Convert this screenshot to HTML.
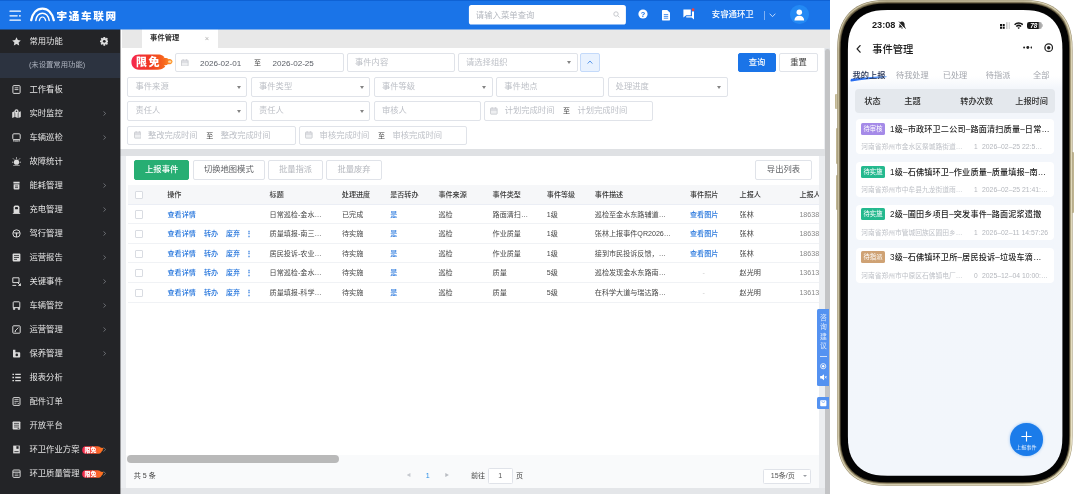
<!DOCTYPE html>
<html lang="zh-CN">
<head>
<meta charset="utf-8">
<title>事件管理</title>
<style>
*{box-sizing:border-box;margin:0;padding:0}
html,body{width:1080px;height:494px;overflow:hidden;background:#fff}
#desk,#phone{will-change:transform}
body{position:relative;font-family:"Liberation Sans","Noto Sans CJK SC",sans-serif;color:#333;-webkit-font-smoothing:antialiased}
.abs{position:absolute}
.t{position:absolute;white-space:nowrap;line-height:1}
/* desktop */
#desk{position:absolute;left:0;top:0;width:829.5px;height:494px;overflow:hidden;background:#eceef1}
#hdr{position:absolute;left:0;top:0;width:829.5px;height:29px;background:#1a74e8;border-top:1px solid #0f62d4}
#side{position:absolute;left:0;top:29px;width:120.4px;height:465px;background:#232427}
.mi{position:absolute;left:0;width:120.4px;height:24px}
.mi .tx{position:absolute;left:29.4px;top:.45px;height:24px;line-height:24px;font-size:8.3px;color:#e4e4e4;white-space:nowrap;letter-spacing:.05px}
.mi svg.ic{position:absolute;left:11.6px;top:7.9px;width:9px;height:9px}
.mi .ch{position:absolute;left:102.5px;top:9.5px;width:3.2px;height:5px}
#tabbar{position:absolute;left:120px;top:29px;width:709.5px;height:19px;background:#e8e8e8;border-left:2px solid #fff}
#filter{position:absolute;left:120.4px;top:48px;width:704.1px;height:101px;background:#fff}
.inp{position:absolute;height:19.2px;margin-top:-.2px;border:1px solid #e0e3e9;border-radius:2px;background:#fff;font-size:8.3px;color:#bcbfc6}
.inp .ph{position:absolute;left:7px;top:0;height:17.2px;line-height:17.2px;white-space:nowrap}
.inp .ar{position:absolute;right:5.8px;top:7.2px;width:0;height:0;border-left:2.4px solid transparent;border-right:2.4px solid transparent;border-top:3px solid #848484}
.r1{top:5.3px}.r2{top:29.6px}.r3{top:53.5px}.r4{top:77.8px}
.btn{position:absolute;height:19.4px;margin-top:-.25px;line-height:17.4px;border:1px solid #e0e3e9;border-radius:2px;background:#fff;font-size:8.3px;color:#606266;text-align:center;white-space:nowrap}
#panel{position:absolute;left:125.5px;top:155.5px;width:693.7px;height:332.5px;background:#fff;overflow:hidden}
.th{position:absolute;top:0;height:19.5px;line-height:21.3px;font-size:7.1px;font-weight:500;color:#383838;white-space:nowrap}
.row{position:absolute;left:2.8px;width:691px;height:19.5px;border-bottom:1px solid #f0f2f5}
.td{position:absolute;top:0;height:19.5px;line-height:21.3px;font-size:7.1px;color:#474747;white-space:nowrap}
.lk{color:#2877dd;font-weight:500}
.cb{position:absolute;left:7px;top:5.9px;width:8.2px;height:8.2px;border:1px solid #d9dce2;border-radius:1px;background:#fff}
/* phone */
#phone{position:absolute;left:837px;top:0px;width:236px;height:486px}
</style>
</head>
<body>
<div id="desk">
<div id="hdr">
  <!-- hamburger -->
  <svg class="abs" style="left:9px;top:8.5px;width:13px;height:12px" viewBox="0 0 13 12"><g stroke="#fff" stroke-width="1.3" stroke-linecap="round"><path d="M1 1.2H11.4"/><path d="M1 5.8H8.2"/><path d="M1 10.2H11.4"/></g><circle cx="10.9" cy="5.8" r=".9" fill="#fff"/></svg>
  <!-- logo arcs -->
  <svg class="abs" style="left:29.5px;top:6px;width:25px;height:14.5px" viewBox="0 0 25 14.5"><g fill="none" stroke="#fff" stroke-linecap="round"><path d="M1.2 13.2C2.5 6 6.8 1.6 12.4 1.6C18 1.6 22.3 6 23.8 13.2" stroke-width="2.3"/><path d="M5.8 13.4C6.6 8.8 9 6.3 12.4 6.3C15.8 6.3 18.3 8.8 19.2 13.4" stroke-width="1.5"/><path d="M9.3 13.6C9.8 11.2 10.8 10 12.4 10C14 10 15.1 11.2 15.7 13.6" stroke-width="1.2"/></g></svg>
  <div class="t" style="left:56.6px;top:10.4px;font-size:10.6px;font-weight:900;color:#fff;letter-spacing:1.65px">宇通车联网</div>
  <!-- search -->
  <svg class="abs" style="left:468px;top:3px;width:159px;height:22px" viewBox="0 0 159 22"><rect x=".9" y="1.1" width="157" height="19.5" rx="2.6" fill="#fff"/></svg>
  <div class="t" style="left:475.8px;top:9.6px;font-size:8.4px;color:#b4b8bf">请输入菜单查询</div>
  <svg class="abs" style="left:612.5px;top:10.2px;width:7px;height:7px" viewBox="0 0 7 7"><circle cx="3" cy="3" r="2.2" fill="none" stroke="#b9bcc2" stroke-width=".8"/><path d="M4.7 4.7L6.4 6.4" stroke="#b9bcc2" stroke-width=".8"/></svg>
  <!-- help -->
  <svg class="abs" style="left:637.6px;top:8.4px;width:10px;height:10px" viewBox="0 0 10 10"><circle cx="5" cy="5" r="4.6" fill="#fff"/><text x="5" y="7.6" font-size="7.4" font-weight="bold" text-anchor="middle" fill="#1a74e8" font-family="Liberation Sans, sans-serif">?</text></svg>
  <!-- doc -->
  <svg class="abs" style="left:661.6px;top:9.2px;width:8px;height:10.4px" viewBox="0 0 8 10.4"><path d="M.6 0H5.2L8 2.8V9.8Q8 10.4 7.4 10.4H.6Q0 10.4 0 9.8V.6Q0 0 .6 0Z" fill="#fff"/><path d="M1.8 4.6H6.2M1.8 6.4H6.2M1.8 8.2H6.2" stroke="#1a74e8" stroke-width=".8"/></svg>
  <!-- chat -->
  <svg class="abs" style="left:683.2px;top:7.2px;width:12px;height:12px" viewBox="0 0 12 12"><path d="M.4 1.6H7.8V7.2H3.2L.4 9.4Z" fill="#fff"/><path d="M9 3.6H11V11.6L8.6 9.6H3.2V8.2H9Z" fill="#fff"/><circle cx="10.1" cy="1.7" r="1.4" fill="#f0413c"/></svg>
  <div class="t" style="left:711.8px;top:9.2px;font-size:8.4px;font-weight:500;color:#fff">安睿通环卫</div>
  <div class="abs" style="left:763.6px;top:9.5px;width:.8px;height:9px;background:#7fb0f3"></div>
  <svg class="abs" style="left:769.4px;top:11.7px;width:7px;height:4.6px" viewBox="0 0 6 4"><path d="M.5 .6L3 3.2L5.5 .6" fill="none" stroke="#cfe2fb" stroke-width=".8"/></svg>
  <!-- avatar -->
  <div class="abs" style="left:790.2px;top:4.4px;width:18.4px;height:18.4px;border-radius:50%;background:#2389f4"></div>
  <svg class="abs" style="left:794.2px;top:7.6px;width:10.6px;height:12px" viewBox="0 0 9.6 10.4"><circle cx="4.8" cy="2.7" r="2.5" fill="#fff"/><path d="M.4 10.2C.4 7.4 2.2 5.8 4.8 5.8C7.4 5.8 9.2 7.4 9.2 10.2Z" fill="#fff"/></svg>
</div>

<div id="side">
<div class="mi" style="top:0px"><svg class="ic" viewBox="0 0 9 9"><path d="M4.5 .3L5.8 3.1L8.8 3.4L6.6 5.4L7.2 8.4L4.5 6.9L1.8 8.4L2.4 5.4L.2 3.4L3.2 3.1Z" fill="#dadada"/></svg><span class="tx">常用功能</span><svg class="abs" style="left:99.6px;top:8.4px;width:8.6px;height:8.6px" viewBox="0 0 9 9"><g fill="#dedede"><circle cx="4.5" cy="4.5" r="3.35"/><rect x="3.55" y="-.1" width="1.9" height="9.2" rx=".3" transform="rotate(0 4.5 4.5)"/><rect x="3.55" y="-.1" width="1.9" height="9.2" rx=".3" transform="rotate(45 4.5 4.5)"/><rect x="3.55" y="-.1" width="1.9" height="9.2" rx=".3" transform="rotate(90 4.5 4.5)"/><rect x="3.55" y="-.1" width="1.9" height="9.2" rx=".3" transform="rotate(135 4.5 4.5)"/></g><circle cx="4.5" cy="4.5" r="1.45" fill="#232427"/></svg></div>
<div class="abs" style="left:0;top:23.6px;width:120.4px;height:25.6px;background:#2c3340"></div>
<div class="t" style="left:28.9px;top:32.1px;font-size:7.35px;color:#adb3be">(未设置常用功能)</div>
<div class="mi" style="top:48px"><svg class="ic" viewBox="0 0 9 9"><rect x=".9" y=".6" width="7.2" height="7.8" rx=".9" fill="none" stroke="#dadada" stroke-width="1"/><path d="M2.6 2.8H6.4M2.6 4.6H6.4" stroke="#dadada" stroke-width=".9"/></svg><span class="tx">工作看板</span></div>
<div class="mi" style="top:72px"><svg class="ic" viewBox="0 0 9 9"><path d="M.2 3.2L2.6 2.2V8L.2 9Z M3.2 2.2L5.8 3.2V9L3.2 8Z M6.4 3.2L8.8 2.2V8L6.4 9Z" fill="#dadada"/><circle cx="4.5" cy="2.4" r="2.1" fill="#dadada"/><circle cx="4.5" cy="2.3" r=".8" fill="#232427"/></svg><span class="tx">实时监控</span><svg class="ch" viewBox="0 0 3.2 5"><path d="M.5 .4L2.7 2.5L.5 4.6" fill="none" stroke="#8a8d93" stroke-width=".7"/></svg></div>
<div class="mi" style="top:96px"><svg class="ic" viewBox="0 0 9 9"><rect x=".8" y=".8" width="7.4" height="5.8" rx="1" fill="none" stroke="#dadada" stroke-width="1"/><path d="M1.8 6.8V8.6M7.2 6.8V8.6M2.6 8H6.4" stroke="#dadada" stroke-width="1"/></svg><span class="tx">车辆巡检</span><svg class="ch" viewBox="0 0 3.2 5"><path d="M.5 .4L2.7 2.5L.5 4.6" fill="none" stroke="#8a8d93" stroke-width=".7"/></svg></div>
<div class="mi" style="top:120px"><svg class="ic" viewBox="0 0 9 9"><circle cx="4.5" cy="5.2" r="2.6" fill="#dadada"/><path d="M4.5 .2V1.8M1 1.4L2.2 2.6M8 1.4L6.8 2.6M0 5.2H1.4M7.6 5.2H9M1.2 8.8H7.8" stroke="#dadada" stroke-width=".8"/></svg><span class="tx">故障统计</span></div>
<div class="mi" style="top:144px"><svg class="ic" viewBox="0 0 9 9"><path d="M1.4 .8H7.6V2.4H1.4Z M1.6 3.2H7.4V7.6Q7.4 8.6 6.4 8.6H2.6Q1.6 8.6 1.6 7.6Z" fill="#dadada"/><path d="M3 5H6M3 6.6H6" stroke="#232427" stroke-width=".7"/></svg><span class="tx">能耗管理</span><svg class="ch" viewBox="0 0 3.2 5"><path d="M.5 .4L2.7 2.5L.5 4.6" fill="none" stroke="#8a8d93" stroke-width=".7"/></svg></div>
<div class="mi" style="top:168px"><svg class="ic" viewBox="0 0 9 9"><path d="M1.6 2.2Q1.6 .6 3.2 .6H5.8Q7.4 .6 7.4 2.2V8.6H1.6Z" fill="#dadada"/><rect x="3" y="2" width="3" height="2.2" rx=".4" fill="#232427"/><path d="M.8 8.6H8.2" stroke="#dadada" stroke-width=".9"/></svg><span class="tx">充电管理</span><svg class="ch" viewBox="0 0 3.2 5"><path d="M.5 .4L2.7 2.5L.5 4.6" fill="none" stroke="#8a8d93" stroke-width=".7"/></svg></div>
<div class="mi" style="top:192px"><svg class="ic" viewBox="0 0 9 9"><circle cx="4.5" cy="4.5" r="3.7" fill="none" stroke="#dadada" stroke-width="1"/><circle cx="4.5" cy="4.7" r=".9" fill="#dadada"/><path d="M1 3.9H8M4.5 5V8" stroke="#dadada" stroke-width=".9"/></svg><span class="tx">驾行管理</span><svg class="ch" viewBox="0 0 3.2 5"><path d="M.5 .4L2.7 2.5L.5 4.6" fill="none" stroke="#8a8d93" stroke-width=".7"/></svg></div>
<div class="mi" style="top:216px"><svg class="ic" viewBox="0 0 9 9"><rect x=".6" y=".6" width="7.8" height="7.8" rx=".8" fill="#dadada"/><path d="M2 2.6H7M2 4.5H7M2 6.4H5" stroke="#232427" stroke-width=".8"/></svg><span class="tx">运营报告</span><svg class="ch" viewBox="0 0 3.2 5"><path d="M.5 .4L2.7 2.5L.5 4.6" fill="none" stroke="#8a8d93" stroke-width=".7"/></svg></div>
<div class="mi" style="top:240px"><svg class="ic" viewBox="0 0 9 9"><path d="M.8 .8H7V5.6H.8Z" fill="none" stroke="#dadada" stroke-width="1"/><path d="M.4 8.4H4.2" stroke="#dadada" stroke-width="1"/><path d="M5 5L8.6 8.6M6.4 8.6H8.6V6.4" stroke="#dadada" stroke-width="1" fill="none"/></svg><span class="tx">关键事件</span><svg class="ch" viewBox="0 0 3.2 5"><path d="M.5 .4L2.7 2.5L.5 4.6" fill="none" stroke="#8a8d93" stroke-width=".7"/></svg></div>
<div class="mi" style="top:264px"><svg class="ic" viewBox="0 0 9 9"><path d="M1.2 1.6Q1.2 .8 2 .8H7Q7.8 .8 7.8 1.6V6.6H1.2Z" fill="none" stroke="#dadada" stroke-width="1"/><path d="M1.4 6.6V8.4H2.8V6.6M6.2 6.6V8.4H7.6V6.6" stroke="#dadada" stroke-width=".8" fill="#dadada"/></svg><span class="tx">车辆管控</span><svg class="ch" viewBox="0 0 3.2 5"><path d="M.5 .4L2.7 2.5L.5 4.6" fill="none" stroke="#8a8d93" stroke-width=".7"/></svg></div>
<div class="mi" style="top:288px"><svg class="ic" viewBox="0 0 9 9"><rect x=".8" y=".8" width="7.4" height="7.4" rx=".8" fill="none" stroke="#dadada" stroke-width="1"/><path d="M3 6L6.4 2.6M2.6 6.4H4" stroke="#dadada" stroke-width=".9"/></svg><span class="tx">运营管理</span><svg class="ch" viewBox="0 0 3.2 5"><path d="M.5 .4L2.7 2.5L.5 4.6" fill="none" stroke="#8a8d93" stroke-width=".7"/></svg></div>
<div class="mi" style="top:312px"><svg class="ic" viewBox="0 0 9 9"><path d="M1 .8H3.4V3.2H7.4Q8.2 3.2 8.2 4V7.8Q8.2 8.6 7.4 8.6H1.8Q1 8.6 1 7.8Z" fill="#dadada"/><circle cx="4.8" cy="5.9" r="1.3" fill="#232427"/></svg><span class="tx">保养管理</span><svg class="ch" viewBox="0 0 3.2 5"><path d="M.5 .4L2.7 2.5L.5 4.6" fill="none" stroke="#8a8d93" stroke-width=".7"/></svg></div>
<div class="mi" style="top:336px"><svg class="ic" viewBox="0 0 9 9"><path d="M.4 1.4H2M3.2 1.4H8.8M.4 4.5H2M3.2 4.5H8.8M.4 7.6H2M3.2 7.6H8.8" stroke="#dadada" stroke-width="1.3"/></svg><span class="tx">报表分析</span></div>
<div class="mi" style="top:360px"><svg class="ic" viewBox="0 0 9 9"><rect x="1" y=".6" width="7" height="7.8" rx=".9" fill="none" stroke="#dadada" stroke-width="1"/><path d="M2.4 2.6H6.6M2.4 4.4H6.6M2.4 6.2H4.4M5.6 6.6H7" stroke="#dadada" stroke-width=".8"/></svg><span class="tx">配件订单</span></div>
<div class="mi" style="top:384px"><svg class="ic" viewBox="0 0 9 9"><rect x=".6" y=".4" width="7.8" height="8.2" rx=".8" fill="#dadada"/><path d="M2 2.4H7M2 4.2H7M2 6H7" stroke="#232427" stroke-width=".7"/><path d="M5.6 7.4H7.2" stroke="#232427" stroke-width=".8"/></svg><span class="tx">开放平台</span></div>
<div class="mi" style="top:408px"><svg class="ic" viewBox="0 0 9 9"><path d="M1.2 .6H7.8V8.4H1.2Z" fill="#dadada"/><rect x="4.4" y="1.2" width="2.2" height="2.6" fill="#232427"/><path d="M2.4 6.6H6.6" stroke="#232427" stroke-width=".8"/></svg><span class="tx">环卫作业方案</span><svg class="abs" style="left:82px;top:8.7px;width:22.4px;height:7.9px" viewBox="0 0 24 8.4"><defs><linearGradient id="g408" x1="0" x2="1"><stop offset="0" stop-color="#f3264f"/><stop offset="1" stop-color="#ff7b1c"/></linearGradient></defs><path d="M4 .2H16.5C18.6 .2 19.6 1 20.4 2.2C21.4 1.6 22.6 2.2 23.4 3.2C22.4 3.2 21.8 3.8 22.2 4.8C21.4 5.2 21 6 20.6 6.6C19.8 7.8 18.6 8.2 16.5 8.2H4C1.4 8.2 .2 6.4 .2 4.2C.2 2 1.4 .2 4 .2Z" fill="url(#g408)"/><text x="2.6" y="6.5" font-size="6.4" font-weight="900" fill="#fff" font-family="Noto Sans CJK SC, sans-serif">限免</text></svg><svg class="abs" style="left:102.6px;top:10.2px;width:3.2px;height:5px" viewBox="0 0 3.2 5"><path d="M.5 .4L2.7 2.5L.5 4.6" fill="none" stroke="#8d8680" stroke-width=".7"/></svg></div>
<div class="mi" style="top:432px"><svg class="ic" viewBox="0 0 9 9"><rect x=".9" y="1" width="7.2" height="7.4" rx=".9" fill="none" stroke="#dadada" stroke-width="1"/><path d="M1 3.2H8" stroke="#dadada" stroke-width="1"/><path d="M2.6 5H6.4M2.6 6.6H6.4" stroke="#dadada" stroke-width=".7"/></svg><span class="tx">环卫质量管理</span><svg class="abs" style="left:82px;top:8.7px;width:22.4px;height:7.9px" viewBox="0 0 24 8.4"><defs><linearGradient id="g432" x1="0" x2="1"><stop offset="0" stop-color="#f3264f"/><stop offset="1" stop-color="#ff7b1c"/></linearGradient></defs><path d="M4 .2H16.5C18.6 .2 19.6 1 20.4 2.2C21.4 1.6 22.6 2.2 23.4 3.2C22.4 3.2 21.8 3.8 22.2 4.8C21.4 5.2 21 6 20.6 6.6C19.8 7.8 18.6 8.2 16.5 8.2H4C1.4 8.2 .2 6.4 .2 4.2C.2 2 1.4 .2 4 .2Z" fill="url(#g432)"/><text x="2.6" y="6.5" font-size="6.4" font-weight="900" fill="#fff" font-family="Noto Sans CJK SC, sans-serif">限免</text></svg><svg class="abs" style="left:102.6px;top:10.2px;width:3.2px;height:5px" viewBox="0 0 3.2 5"><path d="M.5 .4L2.7 2.5L.5 4.6" fill="none" stroke="#8d8680" stroke-width=".7"/></svg></div>
</div>
<div class="abs" style="left:120px;top:149px;width:705px;height:7px;background:#dfe1e4"></div><div class="abs" style="left:120px;top:488px;width:705px;height:6px;background:#e4e6e9"></div><div class="abs" style="left:120px;top:29px;width:1px;height:465px;background:rgba(35,36,39,.42);z-index:5"></div><div class="abs" style="left:0;top:29px;width:829.5px;height:1px;background:rgba(26,116,232,.5);z-index:6"></div><div id="tabbar"><div class="abs" style="left:20px;top:0;width:76px;height:19px;background:#fff"></div><div class="t" style="left:28.1px;top:5.3px;font-size:7.3px;font-weight:bold;color:#2f2f2f">事件管理</div><div class="t" style="left:82.8px;top:6.4px;font-size:7.5px;color:#b0b0b0">×</div></div>
<div id="filter">
<svg class="abs" style="left:10.4px;top:6.3px;width:42px;height:16.1px" viewBox="0 0 42 16"><defs><linearGradient id="gb" x1="0" x2="1"><stop offset="0" stop-color="#f6264f"/><stop offset=".45" stop-color="#f03a22"/><stop offset=".8" stop-color="#f7681c"/><stop offset="1" stop-color="#ff9a2a"/></linearGradient></defs><path d="M8 .4H27C29 .4 30.6 .8 31.8 1.6L33.6 3.1L32.2 4.3C34 3.4 36.4 3.9 37.8 5.1C39.4 4.4 41.1 5.5 41.6 7.4C41.1 9.7 39 10.8 36.9 10.1C36 11.1 34.6 11.5 33 11.1L34.3 12.6L32.4 14C31 15 29.4 15.6 27 15.6H8C3 15.6 .4 12.2 .4 8C.4 3.8 3 .4 8 .4Z" fill="url(#gb)"/><ellipse cx="38.7" cy="7.6" rx="1.7" ry="1.2" fill="#ffd9a6"/><text x="4.9" y="12.1" font-size="11" font-weight="900" fill="#fff" letter-spacing="1.7" font-family="Noto Sans CJK SC, sans-serif">限免</text></svg>
<div class="inp r1" style="left:54.9px;width:168.6px"><svg class="abs" style="left:5.2px;top:4.7px;width:7.6px;height:7.6px" viewBox="0 0 6.6 6.6"><rect x=".4" y="1" width="5.8" height="5.2" rx=".5" fill="#eeeff1" stroke="#c6c8cd" stroke-width=".7"/><path d="M.4 2.6H6.2M1.9 .2V1.4M4.7 .2V1.4" stroke="#c3c6cc" stroke-width=".7"/></svg><span class="ph" style="left:23.6px;top:1px;color:#5a5e66;font-size:8.1px">2026-02-01</span><span class="ph" style="left:77.6px;color:#444;font-size:7px">至</span><span class="ph" style="left:96.2px;top:1px;color:#5a5e66;font-size:8.1px">2026-02-25</span></div>
<div class="inp r1" style="left:226.6px;width:108.4px"><span class="ph">事件内容</span></div>
<div class="inp r1" style="left:337.6px;width:119.6px"><span class="ph">请选择组织</span><i class="ar"></i></div>
<div class="abs r1" style="left:460px;width:19.2px;height:18.8px;border:1px solid #c4dafa;border-radius:2px;background:#e9f2fe"><svg class="abs" style="left:5.6px;top:6px;width:6px;height:4.4px" viewBox="0 0 6 4.4"><path d="M.6 3.6L3 1L5.4 3.6" fill="none" stroke="#4a8de9" stroke-width=".9"/></svg></div>
<div class="btn r1" style="left:617.2px;width:38.8px;background:#1a74e8;border-color:#1a74e8;color:#fff;font-weight:500">查询</div>
<div class="btn r1" style="left:658.9px;width:38.6px;color:#444">重置</div>
<div class="inp r2" style="left:7.1px;width:120px"><span class="ph">事件来源</span><i class="ar"></i></div>
<div class="inp r2" style="left:130.6px;width:119.5px"><span class="ph">事件类型</span><i class="ar"></i></div>
<div class="inp r2" style="left:253.5px;width:119.1px"><span class="ph">事件等级</span><i class="ar"></i></div>
<div class="inp r2" style="left:375.9px;width:108.2px"><span class="ph">事件地点</span></div>
<div class="inp r2" style="left:487.2px;width:120px"><span class="ph">处理进度</span><i class="ar"></i></div>
<div class="inp r3" style="left:7.1px;width:120px"><span class="ph">责任人</span><i class="ar"></i></div>
<div class="inp r3" style="left:130.6px;width:119.5px"><span class="ph">责任人</span><i class="ar"></i></div>
<div class="inp r3" style="left:253.5px;width:107.4px"><span class="ph">审核人</span></div>
<div class="inp r3" style="left:363.9px;width:168.3px"><svg class="abs" style="left:5.2px;top:4.7px;width:7.6px;height:7.6px" viewBox="0 0 6.6 6.6"><rect x=".4" y="1" width="5.8" height="5.2" rx=".5" fill="#eeeff1" stroke="#c6c8cd" stroke-width=".7"/><path d="M.4 2.6H6.2M1.9 .2V1.4M4.7 .2V1.4" stroke="#c3c6cc" stroke-width=".7"/></svg><span class="ph" style="left:19.4px">计划完成时间</span><span class="ph" style="left:77.8px;color:#444;font-size:7px">至</span><span class="ph" style="left:92.2px">计划完成时间</span></div>
<div class="inp r4" style="left:7.1px;width:168.2px"><svg class="abs" style="left:5.2px;top:4.7px;width:7.6px;height:7.6px" viewBox="0 0 6.6 6.6"><rect x=".4" y="1" width="5.8" height="5.2" rx=".5" fill="#eeeff1" stroke="#c6c8cd" stroke-width=".7"/><path d="M.4 2.6H6.2M1.9 .2V1.4M4.7 .2V1.4" stroke="#c3c6cc" stroke-width=".7"/></svg><span class="ph" style="left:19.4px">整改完成时间</span><span class="ph" style="left:77.8px;color:#444;font-size:7px">至</span><span class="ph" style="left:92.2px">整改完成时间</span></div>
<div class="inp r4" style="left:178.8px;width:168px"><svg class="abs" style="left:5.2px;top:4.7px;width:7.6px;height:7.6px" viewBox="0 0 6.6 6.6"><rect x=".4" y="1" width="5.8" height="5.2" rx=".5" fill="#eeeff1" stroke="#c6c8cd" stroke-width=".7"/><path d="M.4 2.6H6.2M1.9 .2V1.4M4.7 .2V1.4" stroke="#c3c6cc" stroke-width=".7"/></svg><span class="ph" style="left:19.4px">审核完成时间</span><span class="ph" style="left:77.8px;color:#444;font-size:7px">至</span><span class="ph" style="left:92.2px">审核完成时间</span></div>
</div>
<div class="abs" style="left:824.5px;top:48px;width:5px;height:446px;background:#e1e4e8"></div><div class="abs" style="left:824.5px;top:48.8px;width:5px;height:450px;background:#c3c4c6;border-radius:2.4px"></div>
<div id="panel">
<div class="btn" style="left:8.3px;top:5px;width:55.7px;background:#27ae73;border-color:#27ae73;color:#fff;font-weight:500">上报事件</div>
<div class="btn" style="left:67.3px;top:5px;width:72px">切换地图模式</div>
<div class="btn" style="left:142.3px;top:5px;width:55.5px;color:#b4b7bd">批量指派</div>
<div class="btn" style="left:200.8px;top:5px;width:55.5px;color:#b4b7bd">批量废弃</div>
<div class="btn" style="left:629.7px;top:5px;width:56.5px">导出列表</div>
<div class="abs" style="left:2.8px;top:29.5px;width:691px;height:19.5px;background:#f6f7f9;border-bottom:1px solid #ebeef5">
<i class="cb"></i>
<span class="th" style="left:38.9px">操作</span>
<span class="th" style="left:141.3px">标题</span>
<span class="th" style="left:213.5px">处理进度</span>
<span class="th" style="left:261.9px">是否转办</span>
<span class="th" style="left:310.1px">事件来源</span>
<span class="th" style="left:364.3px">事件类型</span>
<span class="th" style="left:418.5px">事件等级</span>
<span class="th" style="left:466.5px">事件描述</span>
<span class="th" style="left:561.7px">事件照片</span>
<span class="th" style="left:611.3px">上报人</span>
<span class="th" style="left:671.1px">上报人电话</span>
</div>
<div class="row" style="top:49px"><i class="cb"></i>
<span class="td lk" style="left:39.2px;">查看详情</span>
<span class="td " style="left:141.3px;">日常巡检-金水…</span>
<span class="td " style="left:213.7px;">已完成</span>
<span class="td lk" style="left:261.9px;">是</span>
<span class="td " style="left:310.1px;">巡检</span>
<span class="td " style="left:364.3px;">路面清扫…</span>
<span class="td " style="left:418.5px;">1级</span>
<span class="td " style="left:466.5px;">巡检至金水东路辅道…</span>
<span class="td lk" style="left:561.7px;">查看图片</span>
<span class="td " style="left:611.3px;">张林</span>
<span class="td " style="left:671.1px;color:#888">18638</span>
</div>
<div class="row" style="top:68.63px"><i class="cb"></i>
<span class="td lk" style="left:39.2px;">查看详情</span>
<span class="td lk" style="left:75.7px;">转办</span>
<span class="td lk" style="left:97.6px;">废弃</span>
<span class="td lk" style="left:119.1px;font-weight:bold;font-size:7.5px;margin-left:-2.2px;margin-top:-1.2px">⋮</span>
<span class="td " style="left:141.3px;">质量填报-南三…</span>
<span class="td " style="left:213.7px;">待实施</span>
<span class="td lk" style="left:261.9px;">是</span>
<span class="td " style="left:310.1px;">巡检</span>
<span class="td " style="left:364.3px;">作业质量</span>
<span class="td " style="left:418.5px;">1级</span>
<span class="td " style="left:466.5px;">张林上报事件QR2026…</span>
<span class="td lk" style="left:561.7px;">查看图片</span>
<span class="td " style="left:611.3px;">张林</span>
<span class="td " style="left:671.1px;color:#888">18638</span>
</div>
<div class="row" style="top:88.26px"><i class="cb"></i>
<span class="td lk" style="left:39.2px;">查看详情</span>
<span class="td lk" style="left:75.7px;">转办</span>
<span class="td lk" style="left:97.6px;">废弃</span>
<span class="td lk" style="left:119.1px;font-weight:bold;font-size:7.5px;margin-left:-2.2px;margin-top:-1.2px">⋮</span>
<span class="td " style="left:141.3px;">居民投诉-农业…</span>
<span class="td " style="left:213.7px;">待实施</span>
<span class="td lk" style="left:261.9px;">是</span>
<span class="td " style="left:310.1px;">巡检</span>
<span class="td " style="left:364.3px;">作业质量</span>
<span class="td " style="left:418.5px;">1级</span>
<span class="td " style="left:466.5px;">接到市民投诉反馈，…</span>
<span class="td lk" style="left:561.7px;">查看图片</span>
<span class="td " style="left:611.3px;">张林</span>
<span class="td " style="left:671.1px;color:#888">18638</span>
</div>
<div class="row" style="top:107.89px"><i class="cb"></i>
<span class="td lk" style="left:39.2px;">查看详情</span>
<span class="td lk" style="left:75.7px;">转办</span>
<span class="td lk" style="left:97.6px;">废弃</span>
<span class="td lk" style="left:119.1px;font-weight:bold;font-size:7.5px;margin-left:-2.2px;margin-top:-1.2px">⋮</span>
<span class="td " style="left:141.3px;">日常巡检-金水…</span>
<span class="td " style="left:213.7px;">待实施</span>
<span class="td lk" style="left:261.9px;">是</span>
<span class="td " style="left:310.1px;">巡检</span>
<span class="td " style="left:364.3px;">质量</span>
<span class="td " style="left:418.5px;">5级</span>
<span class="td " style="left:466.5px;">巡检发现金水东路南…</span>
<span class="td " style="left:574.2px;color:#ccc">-</span>
<span class="td " style="left:611.3px;">赵光明</span>
<span class="td " style="left:671.1px;color:#888">13613</span>
</div>
<div class="row" style="top:127.52px"><i class="cb"></i>
<span class="td lk" style="left:39.2px;">查看详情</span>
<span class="td lk" style="left:75.7px;">转办</span>
<span class="td lk" style="left:97.6px;">废弃</span>
<span class="td lk" style="left:119.1px;font-weight:bold;font-size:7.5px;margin-left:-2.2px;margin-top:-1.2px">⋮</span>
<span class="td " style="left:141.3px;">质量填报-科学…</span>
<span class="td " style="left:213.7px;">待实施</span>
<span class="td lk" style="left:261.9px;">是</span>
<span class="td " style="left:310.1px;">巡检</span>
<span class="td " style="left:364.3px;">质量</span>
<span class="td " style="left:418.5px;">5级</span>
<span class="td " style="left:466.5px;">在科学大道与瑞达路…</span>
<span class="td " style="left:574.2px;color:#ccc">-</span>
<span class="td " style="left:611.3px;">赵光明</span>
<span class="td " style="left:671.1px;color:#888">13613</span>
</div>
<div class="abs" style="left:0;top:299px;width:693.7px;height:33.5px;background:#f9fafb"></div>
<div class="abs" style="left:1.3px;top:299.2px;width:212.2px;height:8.8px;border-radius:4.4px;background:#b9b9b9"></div>
<div class="t" style="left:8.3px;top:317.1px;font-size:7.1px;color:#444">共 5 条</div>
<div class="t" style="left:280.9px;top:317.8px;font-size:4.4px;color:#c6c9cf">◀</div>
<div class="t" style="left:300.3px;top:317.1px;font-size:7.1px;color:#2b8fe6">1</div>
<div class="t" style="left:319.3px;top:317.8px;font-size:4.4px;color:#b9bcc2">▶</div>
<div class="t" style="left:345.5px;top:317.1px;font-size:7.1px;color:#444">前往</div>
<div class="abs" style="left:363.3px;top:312.8px;width:24.8px;height:15.8px;margin-left:-1px;border:1px solid #e0e3e9;border-radius:1.5px;background:#fff;font-size:7.1px;line-height:14.6px;text-align:center;color:#555">1</div>
<div class="t" style="left:390.5px;top:317.1px;font-size:7.1px;color:#444">页</div>
<div class="abs" style="left:637.9px;top:313.2px;width:47.2px;height:15.2px;border:1px solid #e0e3e9;border-radius:1.5px;background:#fff;font-size:7.1px;line-height:13.6px;color:#555;padding-left:6.4px">15条/页<i class="abs" style="right:3px;top:5.4px;width:0;height:0;border-left:2.1px solid transparent;border-right:2.1px solid transparent;border-top:2.6px solid #9a9da3"></i></div>
</div>
<div class="abs" style="left:817.4px;top:309.4px;width:12.1px;height:76.6px;background:#5492f1;border-radius:1.5px 0 0 1.5px"></div>
<div class="t" style="left:820px;top:314.6px;font-size:6.8px;color:#dce9fd">咨</div>
<div class="t" style="left:820px;top:324.05px;font-size:6.8px;color:#dce9fd">询</div>
<div class="t" style="left:820px;top:333.5px;font-size:6.8px;color:#dce9fd">建</div>
<div class="t" style="left:820px;top:342.95px;font-size:6.8px;color:#dce9fd">议</div>
<div class="abs" style="left:820px;top:356.4px;width:7px;height:.8px;background:#cfe0fb"></div>
<svg class="abs" style="left:820.4px;top:363.2px;width:6.4px;height:6.4px" viewBox="0 0 6.4 6.4"><circle cx="3.2" cy="3.2" r="2.6" fill="none" stroke="#fff" stroke-width=".8"/><circle cx="3.2" cy="3.2" r="1.2" fill="#fff"/></svg>
<svg class="abs" style="left:820.2px;top:374.2px;width:7px;height:6.4px" viewBox="0 0 7 6.4"><path d="M.2 2H1.8L4 .2V6.2L1.8 4.4H.2Z" fill="#fff"/><path d="M4.8 2L6.6 4.4M6.6 2L4.8 4.4" stroke="#fff" stroke-width=".7"/></svg>
<div class="abs" style="left:817.4px;top:397.4px;width:12.1px;height:12px;background:#5492f1;border-radius:1.5px 0 0 1.5px"></div>
<svg class="abs" style="left:820.2px;top:400.2px;width:6.6px;height:6.4px" viewBox="0 0 6.6 6.4"><rect x=".2" y=".2" width="6.2" height="6" rx=".8" fill="#fff"/><path d="M1.6 1.6Q3.3 3.4 5 1.6" fill="none" stroke="#5492f1" stroke-width=".7"/></svg>
</div>
<div id="phone">
<div class="abs" style="left:-2px;top:94.3px;width:3px;height:14.6px;background:linear-gradient(90deg,#b9ae8a,#e3dbbd);border-radius:1px"></div>
<div class="abs" style="left:-1.4px;top:128px;width:3px;height:35.5px;background:linear-gradient(90deg,#b9ae8a,#e3dbbd);border-radius:1px"></div>
<div class="abs" style="left:-1.4px;top:174.7px;width:3px;height:35.3px;background:linear-gradient(90deg,#b9ae8a,#e3dbbd);border-radius:1px"></div>
<div class="abs" style="left:234px;top:152.3px;width:3px;height:60.7px;background:linear-gradient(90deg,#e3dbbd,#b9ae8a);border-radius:1px"></div>
<svg class="abs" style="left:0;top:0;width:236px;height:486px" viewBox="0 0 236 486"><defs><linearGradient id="pg1" x1="0" y1="0" x2="1" y2="1"><stop offset="0" stop-color="#8b8062"/><stop offset="1" stop-color="#a79c7a"/></linearGradient><linearGradient id="pg2" x1="0" y1="0" x2="1" y2="1"><stop offset="0" stop-color="#c9c0a0"/><stop offset="1" stop-color="#ebe4c8"/></linearGradient><linearGradient id="pg3" x1="0" y1="0" x2="1" y2="1"><stop offset="0" stop-color="#8e8363"/><stop offset="1" stop-color="#c5bc99"/></linearGradient><linearGradient id="pg5" x1="0" y1="0" x2="0" y2="1"><stop offset="0" stop-color="#fff"/><stop offset=".142" stop-color="#fff"/><stop offset=".168" stop-color="#f3f6fb"/><stop offset="1" stop-color="#f2f6fb"/></linearGradient></defs><path d="M0.20 50.00L0.46 41.63L1.23 35.34L2.50 29.76L4.28 24.71L6.55 20.13L9.30 16.00L12.52 12.32L16.20 9.10L20.33 6.35L24.91 4.08L29.96 2.30L35.54 1.03L41.83 0.26L50.20 0.00L185.60 0.00L193.97 0.26L200.26 1.03L205.84 2.30L210.89 4.08L215.47 6.35L219.60 9.10L223.28 12.32L226.50 16.00L229.25 20.13L231.52 24.71L233.30 29.76L234.57 35.34L235.34 41.63L235.60 50.00L235.60 435.80L235.34 444.17L234.57 450.46L233.30 456.04L231.52 461.09L229.25 465.67L226.50 469.80L223.28 473.48L219.60 476.70L215.47 479.45L210.89 481.72L205.84 483.50L200.26 484.77L193.97 485.54L185.60 485.80L50.20 485.80L41.83 485.54L35.54 484.77L29.96 483.50L24.91 481.72L20.33 479.45L16.20 476.70L12.52 473.48L9.30 469.80L6.55 465.67L4.28 461.09L2.50 456.04L1.23 450.46L0.46 444.17L0.20 435.80Z" fill="url(#pg1)"/><path d="M0.70 50.00L0.95 41.71L1.72 35.48L2.98 29.96L4.74 24.96L6.99 20.43L9.71 16.34L12.90 12.70L16.54 9.51L20.63 6.79L25.16 4.54L30.16 2.78L35.68 1.52L41.91 0.75L50.20 0.50L185.60 0.50L193.89 0.75L200.12 1.52L205.64 2.78L210.64 4.54L215.17 6.79L219.26 9.51L222.90 12.70L226.09 16.34L228.81 20.43L231.06 24.96L232.82 29.96L234.08 35.48L234.85 41.71L235.10 50.00L235.10 435.80L234.85 444.09L234.08 450.32L232.82 455.84L231.06 460.84L228.81 465.37L226.09 469.46L222.90 473.10L219.26 476.29L215.17 479.01L210.64 481.26L205.64 483.02L200.12 484.28L193.89 485.05L185.60 485.30L50.20 485.30L41.91 485.05L35.68 484.28L30.16 483.02L25.16 481.26L20.63 479.01L16.54 476.29L12.90 473.10L9.71 469.46L6.99 465.37L4.74 460.84L2.98 455.84L1.72 450.32L0.95 444.09L0.70 435.80Z" fill="url(#pg2)"/><path d="M1.80 50.00L2.05 41.90L2.79 35.81L4.03 30.41L5.75 25.52L7.95 21.09L10.61 17.09L13.73 13.53L17.29 10.41L21.29 7.75L25.72 5.55L30.61 3.83L36.01 2.59L42.10 1.85L50.20 1.60L185.60 1.60L193.70 1.85L199.79 2.59L205.19 3.83L210.08 5.55L214.51 7.75L218.51 10.41L222.07 13.53L225.19 17.09L227.85 21.09L230.05 25.52L231.77 30.41L233.01 35.81L233.75 41.90L234.00 50.00L234.00 435.80L233.75 443.90L233.01 449.99L231.77 455.39L230.05 460.28L227.85 464.71L225.19 468.71L222.07 472.27L218.51 475.39L214.51 478.05L210.08 480.25L205.19 481.97L199.79 483.21L193.70 483.95L185.60 484.20L50.20 484.20L42.10 483.95L36.01 483.21L30.61 481.97L25.72 480.25L21.29 478.05L17.29 475.39L13.73 472.27L10.61 468.71L7.95 464.71L5.75 460.28L4.03 455.39L2.79 449.99L2.05 443.90L1.80 435.80Z" fill="url(#pg3)"/><path d="M2.70 50.00L2.94 42.05L3.67 36.07L4.89 30.77L6.58 25.97L8.73 21.62L11.35 17.70L14.40 14.20L17.90 11.15L21.82 8.53L26.17 6.38L30.97 4.69L36.27 3.47L42.25 2.74L50.20 2.50L185.60 2.50L193.55 2.74L199.53 3.47L204.83 4.69L209.63 6.38L213.98 8.53L217.90 11.15L221.40 14.20L224.45 17.70L227.07 21.62L229.22 25.97L230.91 30.77L232.13 36.07L232.86 42.05L233.10 50.00L233.10 435.80L232.86 443.75L232.13 449.73L230.91 455.03L229.22 459.83L227.07 464.18L224.45 468.10L221.40 471.60L217.90 474.65L213.98 477.27L209.63 479.42L204.83 481.11L199.53 482.33L193.55 483.06L185.60 483.30L50.20 483.30L42.25 483.06L36.27 482.33L30.97 481.11L26.17 479.42L21.82 477.27L17.90 474.65L14.40 471.60L11.35 468.10L8.73 464.18L6.58 459.83L4.89 455.03L3.67 449.73L2.94 443.75L2.70 435.80Z" fill="#5d533b"/><path d="M3.60 50.00L3.84 42.22L4.55 36.36L5.74 31.18L7.39 26.48L9.51 22.22L12.06 18.38L15.06 14.96L18.48 11.96L22.32 9.41L26.58 7.29L31.28 5.64L36.46 4.45L42.32 3.74L50.10 3.50L185.60 3.50L193.38 3.74L199.24 4.45L204.42 5.64L209.12 7.29L213.38 9.41L217.22 11.96L220.64 14.96L223.64 18.38L226.19 22.22L228.31 26.48L229.96 31.18L231.15 36.36L231.86 42.22L232.10 50.00L232.10 435.70L231.86 443.48L231.15 449.34L229.96 454.52L228.31 459.22L226.19 463.48L223.64 467.32L220.64 470.74L217.22 473.74L213.38 476.29L209.12 478.41L204.42 480.06L199.24 481.25L193.38 481.96L185.60 482.20L50.10 482.20L42.32 481.96L36.46 481.25L31.28 480.06L26.58 478.41L22.32 476.29L18.48 473.74L15.06 470.74L12.06 467.32L9.51 463.48L7.39 459.22L5.74 454.52L4.55 449.34L3.84 443.48L3.60 435.70Z" fill="#030303"/><path d="M10.90 49.60L11.10 42.97L11.71 37.99L12.72 33.57L14.13 29.57L15.93 25.94L18.11 22.67L20.66 19.76L23.57 17.21L26.84 15.03L30.47 13.23L34.47 11.82L38.89 10.81L43.87 10.20L50.50 10.00L185.80 10.00L192.43 10.20L197.41 10.81L201.83 11.82L205.83 13.23L209.46 15.03L212.73 17.21L215.64 19.76L218.19 22.67L220.37 25.94L222.17 29.57L223.58 33.57L224.59 37.99L225.20 42.97L225.40 49.60L225.40 436.10L225.20 442.73L224.59 447.71L223.58 452.13L222.17 456.13L220.37 459.76L218.19 463.03L215.64 465.94L212.73 468.49L209.46 470.67L205.83 472.47L201.83 473.88L197.41 474.89L192.43 475.50L185.80 475.70L50.50 475.70L43.87 475.50L38.89 474.89L34.47 473.88L30.47 472.47L26.84 470.67L23.57 468.49L20.66 465.94L18.11 463.03L15.93 459.76L14.13 456.13L12.72 452.13L11.71 447.71L11.10 442.73L10.90 436.10Z" fill="url(#pg5)"/></svg>

<div id="scr" class="abs" style="left:10.9px;top:10px;width:214.5px;height:465.7px"><div class="abs" style="left:-.1px;top:.4px;width:214.6px;height:465px">
<div class="t" style="left:24.2px;top:10.8px;font-size:9.2px;font-weight:bold;color:#1a1a1a;letter-spacing:0">23:08</div>
<svg class="abs" style="left:49.8px;top:10.9px;width:8px;height:8.4px" viewBox="0 0 7 7.4"><path d="M3.5 .4C5 .4 5.8 1.6 5.8 3V4.6L6.6 5.8H.4L1.2 4.6V3C1.2 1.6 2 .4 3.5 .4Z M2.7 6.4H4.3Q3.5 7.4 2.7 6.4Z" fill="#222"/><path d="M.4 .9L6.2 7.1" stroke="#fff" stroke-width=".9"/><path d="M.9 .5L6.7 6.7" stroke="#222" stroke-width=".8"/></svg>
<svg class="abs" style="left:151.8px;top:11.6px;width:10.6px;height:7.4px" viewBox="0 0 10.6 7.4"><rect x="0" y="2" width="2" height="2" fill="#111"/><rect x="0" y="4.6" width="2" height="2.2" fill="#111"/><rect x="2.7" y="2" width="2" height="2" fill="#111"/><rect x="2.7" y="4.6" width="2" height="2.2" fill="#111"/><rect x="6" y=".2" width="1.6" height="6.8" fill="#c9c9c9"/><rect x="8.6" y=".2" width="1.6" height="6.8" fill="#d9d9d9"/></svg>
<svg class="abs" style="left:166px;top:11.6px;width:9.4px;height:7.2px" viewBox="0 0 9.4 7.2"><path d="M.6 2.7C2.9 .4 6.5 .4 8.8 2.7" fill="none" stroke="#111" stroke-width="1.6"/><path d="M2.3 4.5C3.7 3.2 5.7 3.2 7.1 4.5" fill="none" stroke="#111" stroke-width="1.5"/><path d="M3.5 5.7Q4.7 4.8 5.9 5.7L4.7 7.1Z" fill="#111"/></svg>
<div class="abs" style="left:179.5px;top:11.6px;width:14.4px;height:7.4px;border-radius:2.2px;background:linear-gradient(90deg,#161616 0,#161616 76%,#9a9a9a 78%,#b5b5b5 100%)"></div>
<div class="abs" style="left:194.2px;top:13.8px;width:1px;height:3px;border-radius:0 1px 1px 0;background:#c4c4c4"></div>
<div class="t" style="left:182.4px;top:12.4px;font-size:6.4px;font-weight:bold;color:#fff;font-style:italic">78</div>
<svg class="abs" style="left:8.4px;top:35px;width:5px;height:7.8px" viewBox="0 0 5 8.4"><path d="M4.2 .7L1 4.2L4.2 7.7" fill="none" stroke="#222" stroke-width="1.4" stroke-linecap="round" stroke-linejoin="round"/></svg>
<div class="t" style="left:24.4px;top:34.2px;font-size:10.3px;font-weight:500;color:#1b1b1b">事件管理</div>
<svg class="abs" style="left:175px;top:35.9px;width:9.6px;height:3px" viewBox="0 0 9.6 3"><circle cx="1.1" cy="1.5" r="1" fill="#222"/><circle cx="4.8" cy="1.5" r="1.45" fill="#222"/><circle cx="8.5" cy="1.5" r="1" fill="#222"/></svg>
<svg class="abs" style="left:196px;top:33.1px;width:9.4px;height:9.4px" viewBox="0 0 9.4 9.4"><circle cx="4.7" cy="4.7" r="3.8" fill="none" stroke="#222" stroke-width="1.25"/><circle cx="4.7" cy="4.7" r="1.7" fill="#222"/></svg>
<svg class="abs" style="left:1.8px;top:64.6px;width:37px;height:7px" viewBox="0 0 37 7"><defs><linearGradient id="ul" x1="0" x2="1"><stop offset="0" stop-color="#2468ee"/><stop offset=".55" stop-color="#3f82f3"/><stop offset="1" stop-color="#8db8f9"/></linearGradient></defs><path d="M.5 6.2C.4 5 .8 4 1.6 3.7C12 2.6 24 1.6 36.4 1C36.8 1.4 36.8 1.9 36.4 2.2C24 3.4 12 4.8 1.4 6.6Z" fill="url(#ul)"/></svg>
<div class="t" style="left:4.8px;top:61.2px;font-size:8.2px;color:#1c2a4d;font-weight:500">我的上报</div>
<div class="t" style="left:48.2px;top:61.2px;font-size:8.2px;color:#a3a6ad">待我处理</div>
<div class="t" style="left:94.9px;top:61.2px;font-size:8.2px;color:#a3a6ad">已处理</div>
<div class="t" style="left:138px;top:61.2px;font-size:8.2px;color:#a3a6ad">待指派</div>
<div class="t" style="left:185.2px;top:61.2px;font-size:8.2px;color:#a3a6ad">全部</div>
<div class="abs" style="left:7.2px;top:79px;width:199.6px;height:23.8px;border-radius:4px;background:#e4e8ed"></div>
<div class="t" style="left:16.5px;top:87.6px;font-size:8.2px;font-weight:500;color:#2a2a2a">状态</div>
<div class="t" style="left:56.4px;top:87.6px;font-size:8.2px;font-weight:500;color:#2a2a2a">主题</div>
<div class="t" style="left:112.4px;top:87.6px;font-size:8.2px;font-weight:500;color:#2a2a2a">转办次数</div>
<div class="t" style="left:167.4px;top:87.6px;font-size:8.2px;font-weight:500;color:#2a2a2a">上报时间</div>
<div class="abs" style="left:7.8px;top:108.4px;width:198.6px;height:35.6px;border-radius:4px;background:#fff">
<div class="abs" style="left:5.7px;top:3.8px;width:23.4px;height:12px;border-radius:1.6px;background:#a58ae8;color:#fff;font-size:6.3px;line-height:12px;text-align:center;white-space:nowrap">待审核</div>
<div class="t" style="left:34.4px;top:6.8px;font-size:8.15px;font-weight:500;color:#262626;letter-spacing:.17px">1级–市政环卫二公司–路面清扫质量–日常…</div>
<div class="t" style="left:5.7px;top:25.5px;font-size:6.75px;color:#bfc2c8">河南省郑州市金水区祭城路街道…</div>
<div class="t" style="left:118.4px;top:25.5px;font-size:6.6px;color:#b4b7bd">1</div>
<div class="t" style="left:126.4px;top:25.4px;font-size:6.85px;color:#b4b7bd">2026–02–25 22:5…</div>
</div>
<div class="abs" style="left:7.8px;top:151.35px;width:198.6px;height:35.6px;border-radius:4px;background:#fff">
<div class="abs" style="left:5.7px;top:3.8px;width:23.4px;height:12px;border-radius:1.6px;background:#24b98e;color:#fff;font-size:6.3px;line-height:12px;text-align:center;white-space:nowrap">待实施</div>
<div class="t" style="left:34.4px;top:6.8px;font-size:8.15px;font-weight:500;color:#262626;letter-spacing:.17px">1级–石佛镇环卫–作业质量–质量填报–南…</div>
<div class="t" style="left:5.7px;top:25.5px;font-size:6.75px;color:#bfc2c8">河南省郑州市中牟县九龙街道雨…</div>
<div class="t" style="left:118.4px;top:25.5px;font-size:6.6px;color:#b4b7bd">1</div>
<div class="t" style="left:126.4px;top:25.4px;font-size:6.85px;color:#b4b7bd">2026–02–25 21:41:…</div>
</div>
<div class="abs" style="left:7.8px;top:194.3px;width:198.6px;height:35.6px;border-radius:4px;background:#fff">
<div class="abs" style="left:5.7px;top:3.8px;width:23.4px;height:12px;border-radius:1.6px;background:#24b98e;color:#fff;font-size:6.3px;line-height:12px;text-align:center;white-space:nowrap">待实施</div>
<div class="t" style="left:34.4px;top:6.8px;font-size:8.15px;font-weight:500;color:#262626;letter-spacing:.17px">2级–圃田乡项目–突发事件–路面泥浆遗撒</div>
<div class="t" style="left:5.7px;top:25.5px;font-size:6.75px;color:#bfc2c8">河南省郑州市管城回族区圃田乡…</div>
<div class="t" style="left:118.4px;top:25.5px;font-size:6.6px;color:#b4b7bd">1</div>
<div class="t" style="left:126.4px;top:25.4px;font-size:6.85px;color:#b4b7bd">2026–02–11 14:57:26</div>
</div>
<div class="abs" style="left:7.8px;top:237.25px;width:198.6px;height:35.6px;border-radius:4px;background:#fff">
<div class="abs" style="left:5.7px;top:3.8px;width:23.4px;height:12px;border-radius:1.6px;background:#cfa274;color:#fff;font-size:6.3px;line-height:12px;text-align:center;white-space:nowrap">待指派</div>
<div class="t" style="left:34.4px;top:6.8px;font-size:8.15px;font-weight:500;color:#262626;letter-spacing:.17px">3级–石佛镇环卫所–居民投诉–垃圾车滴…</div>
<div class="t" style="left:5.7px;top:25.5px;font-size:6.75px;color:#bfc2c8">河南省郑州市中原区石佛镇电厂…</div>
<div class="t" style="left:118.4px;top:25.5px;font-size:6.6px;color:#b4b7bd">0</div>
<div class="t" style="left:126.4px;top:25.4px;font-size:6.85px;color:#b4b7bd">2025–12–04 10:00:…</div>
</div>
<div class="abs" style="left:162.2px;top:413px;width:32.6px;height:32.6px;border-radius:50%;background:#1b7cea;box-shadow:0 0 3px rgba(27,124,234,.45)"></div>
<svg class="abs" style="left:173px;top:420.6px;width:11px;height:11px" viewBox="0 0 11 11"><path d="M5.5 .4V10.6M.4 5.5H10.6" stroke="#fff" stroke-width="1.1"/></svg>
<div class="t" style="left:168.3px;top:434.4px;font-size:5.1px;color:#e6f0fd">上报事件</div>
</div></div>
</div>
</body>
</html>
